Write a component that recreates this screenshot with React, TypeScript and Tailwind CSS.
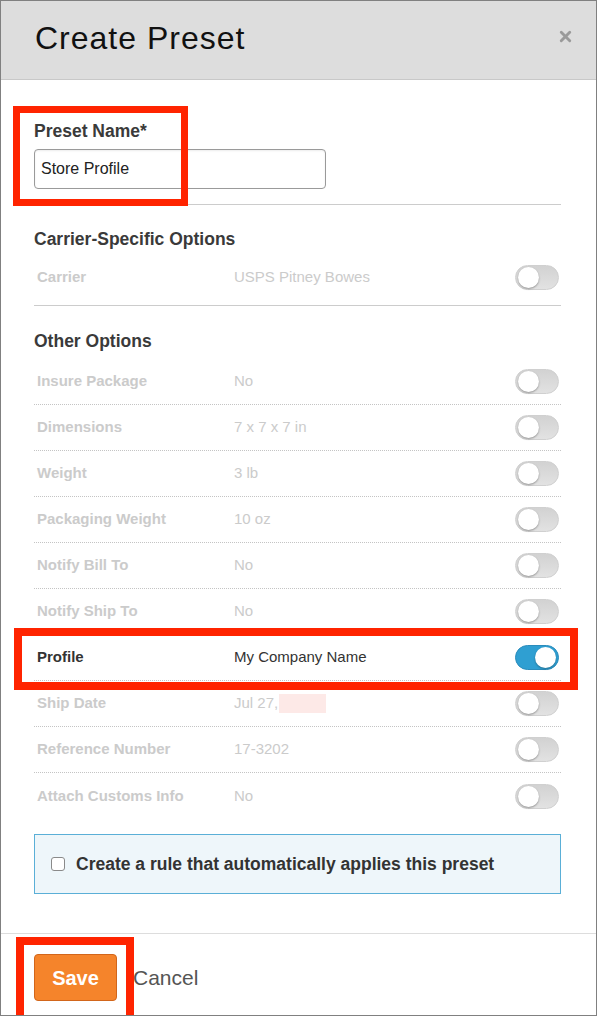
import { X } from "lucide-react"

type Row = { label: string; value: string; on?: boolean; redact?: boolean }

const otherOptions: Row[] = [
  { label: "Insure Package", value: "No" },
  { label: "Dimensions", value: "7 x 7 x 7 in" },
  { label: "Weight", value: "3 lb" },
  { label: "Packaging Weight", value: "10 oz" },
  { label: "Notify Bill To", value: "No" },
  { label: "Notify Ship To", value: "No" },
  { label: "Profile", value: "My Company Name", on: true },
  { label: "Ship Date", value: "Jul 27,", redact: true },
  { label: "Reference Number", value: "17-3202" },
  { label: "Attach Customs Info", value: "No" },
]

function Toggle({ on }: { on?: boolean }) {
  return on ? (
    <div className="relative h-[25px] w-[44px] rounded-full border border-[#2a8cbc] bg-[#2f9fd2]">
      <div className="absolute right-[2px] top-[1px] h-[21px] w-[21px] rounded-full bg-white shadow-[0_1px_2px_rgba(0,0,0,0.3)]" />
    </div>
  ) : (
    <div className="relative h-[25px] w-[44px] rounded-full border border-[#d0d0d0] bg-gradient-to-b from-[#d2d2d2] to-[#e2e2e2]">
      <div className="absolute left-[2px] top-[1px] h-[21px] w-[21px] rounded-full bg-white shadow-[0_1px_2px_rgba(0,0,0,0.35)]" />
    </div>
  )
}

function OptionRow({ row, last }: { row: Row; last?: boolean }) {
  const active = row.on
  return (
    <div
      className={`flex h-[46px] items-center pl-[3px] pr-[2px] ${last ? "" : "border-b border-dotted border-[#c4c4c4]"}`}
    >
      <div className={`w-[197px] text-[15px] font-bold ${active ? "text-[#333]" : "text-[#cbcbcb]"}`}>{row.label}</div>
      <div className={`flex flex-1 items-center text-[15px] ${active ? "text-[#333]" : "text-[#cbcbcb]"}`}>
        {row.value}
        {row.redact && <span className="ml-[1px] inline-block h-[19px] w-[47px] bg-[#fde9e7]" />}
      </div>
      <Toggle on={row.on} />
    </div>
  )
}

export default function App() {
  return (
    <div
      className="relative h-[1016px] w-[597px] overflow-hidden border border-[#808080] bg-white text-[#333]"
      style={{ fontFamily: '"Liberation Sans", Arial, sans-serif' }}
    >
      {/* Header */}
      <div className="flex h-[79px] items-center justify-between border-b border-[#c8c8c8] bg-[#dddddd] pl-[34px] pr-[22px]">
        <h1 className="pb-[4px] text-[32px] tracking-[1px] text-[#111]">Create Preset</h1>
        <X size={17} strokeWidth={4} className="mb-[7px] text-[#9a9a9a]" />
      </div>

      {/* Body */}
      <div className="pl-[33px] pr-[35px] pt-[41px]">
        <label className="block text-[17.5px] font-bold leading-[20px] text-[#3a3a3a]">Preset Name*</label>
        <input
          defaultValue="Store Profile"
          className="mt-[8px] h-[40px] w-[292px] rounded-[4px] border border-[#9a9a9a] pl-[6px] text-[16px] text-[#222] shadow-[inset_0_1px_2px_rgba(0,0,0,0.08)] outline-none"
        />
        <div className="mt-[15px] h-px bg-[#cccccc]" />

        <h2 className="mt-[24px] text-[17.5px] font-bold leading-[20px] text-[#3a3a3a]">Carrier-Specific Options</h2>
        <div className="mt-[5px]">
          <OptionRow row={{ label: "Carrier", value: "USPS Pitney Bowes" }} last />
        </div>
        <div className="mt-[5px] h-px bg-[#cccccc]" />

        <h2 className="mt-[25px] text-[17.5px] font-bold leading-[20px] text-[#3a3a3a]">Other Options</h2>
        <div className="mt-[8px]">
          {otherOptions.map((row, i) => (
            <OptionRow key={row.label} row={row} last={i === otherOptions.length - 1} />
          ))}
        </div>

        <div className="mt-[15px] flex h-[60px] items-center gap-[11px] border border-[#5aafd7] bg-[#eef6fa] pl-[16px]">
          <span className="h-[14px] w-[14px] rounded-[3px] border border-[#8a8a8a] bg-white" />
          <span className="text-[17.5px] font-bold text-[#333]">Create a rule that automatically applies this preset</span>
        </div>
      </div>

      {/* Footer */}
      <div className="mt-[39px] flex items-center gap-[16px] border-t border-[#dddddd] pl-[33px] pt-[20px]">
        <button className="h-[47px] w-[83px] rounded-[4px] border border-[#d2661b] bg-[#f5842b] text-[20px] font-bold text-white">
          Save
        </button>
        <span className="text-[21px] text-[#555]">Cancel</span>
      </div>

      {/* Annotation boxes */}
      <div className="absolute left-[12px] top-[105px] h-[100px] w-[175px] border-[7px] border-[#ff2400]" />
      <div className="absolute left-[13px] top-[627px] h-[62px] w-[564px] border-[8px] border-[#ff2400]" />
      <div className="absolute left-[15px] top-[936px] h-[100px] w-[118px] border-[8px] border-[#ff2400]" />
    </div>
  )
}
